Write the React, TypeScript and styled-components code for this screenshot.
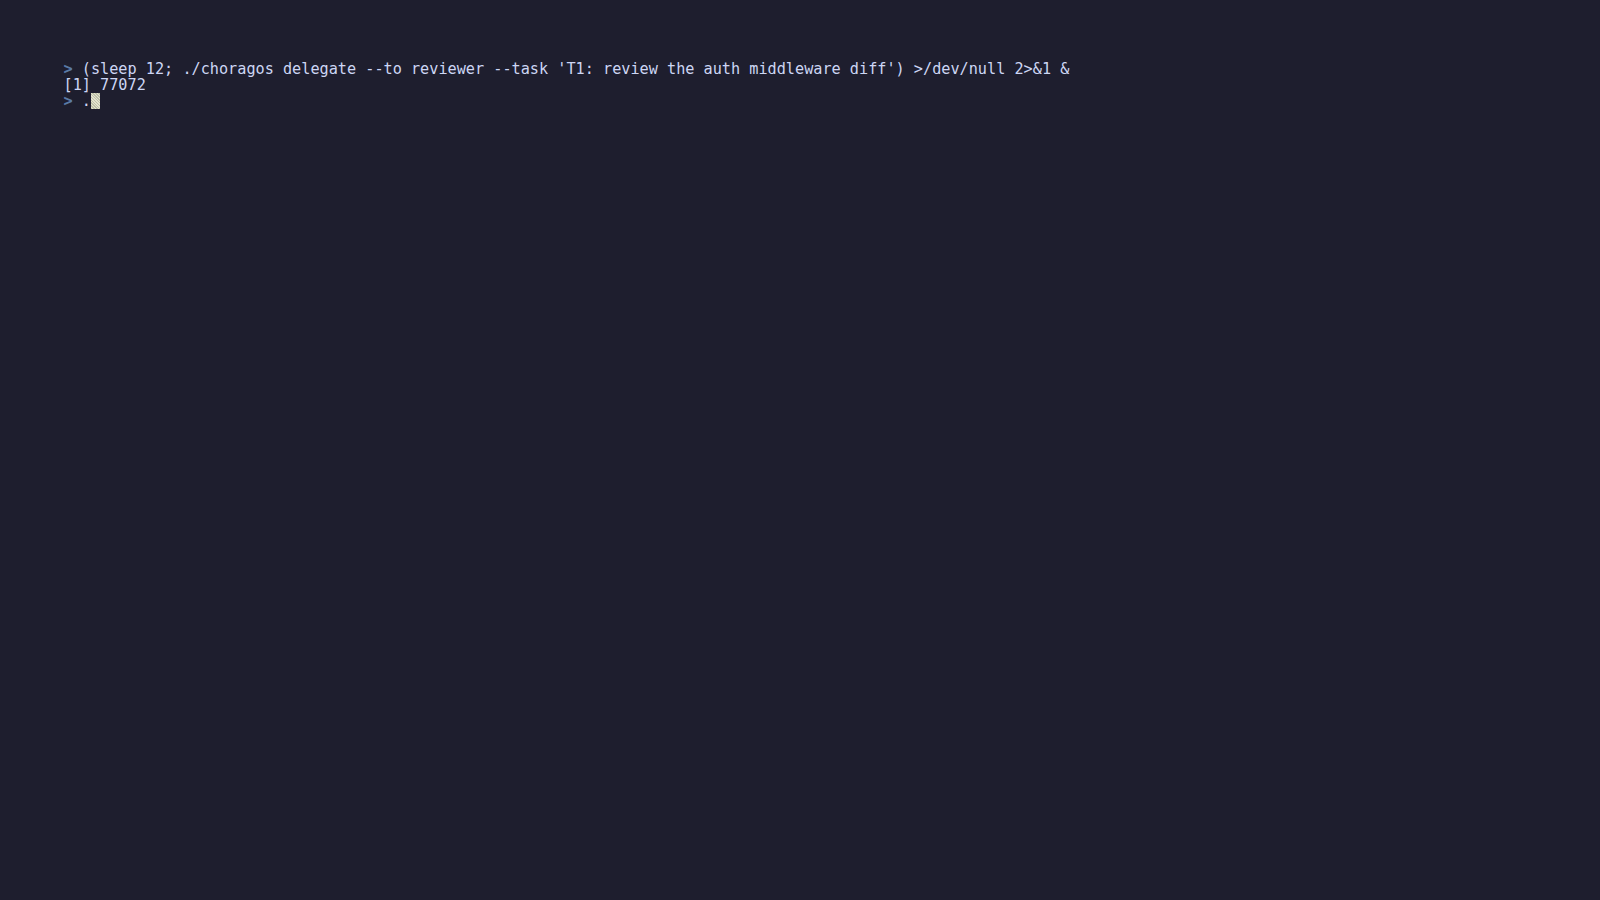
import React from "react";
import styled, { createGlobalStyle } from "styled-components";

const Global = createGlobalStyle`
  html, body {
    margin: 0;
    padding: 0;
    background: #1e1e2e;
  }
  #root {
    min-height: 100vh;
  }
`;

const Screen = styled.main`
  width: 1600px;
  height: 900px;
  box-sizing: border-box;
  background: #1e1e2e;
  padding: 61px 0 0 63.5px;
  font-family: "DejaVu Sans Mono", "Liberation Mono", monospace;
  font-size: 15.2px;
  line-height: 16px;
  color: #cdd6f4;
  overflow: hidden;
`;

const Line = styled.div`
  white-space: pre;
  height: 16px;
  display: flex;
  align-items: center;
`;

const Prompt = styled.span`
  color: #5a7ba6;
  font-weight: bold;
`;

const Cursor = styled.span`
  display: inline-block;
  width: 9px;
  height: 16px;
  background-color: #e4e4cf;
  background-image: repeating-linear-gradient(
    45deg,
    rgba(120, 130, 100, 0.35) 0 1px,
    transparent 1px 2px
  );
`;

export default function App() {
  return (
    <>
      <Global />
      <Screen>
        <Line>
          <Prompt>{"> "}</Prompt>
          {"(sleep 12; ./choragos delegate --to reviewer --task 'T1: review the auth middleware diff') >/dev/null 2>&1 &"}
        </Line>
        <Line>{"[1] 77072"}</Line>
        <Line>
          <Prompt>{"> "}</Prompt>
          {"."}
          <Cursor />
        </Line>
      </Screen>
    </>
  );
}
